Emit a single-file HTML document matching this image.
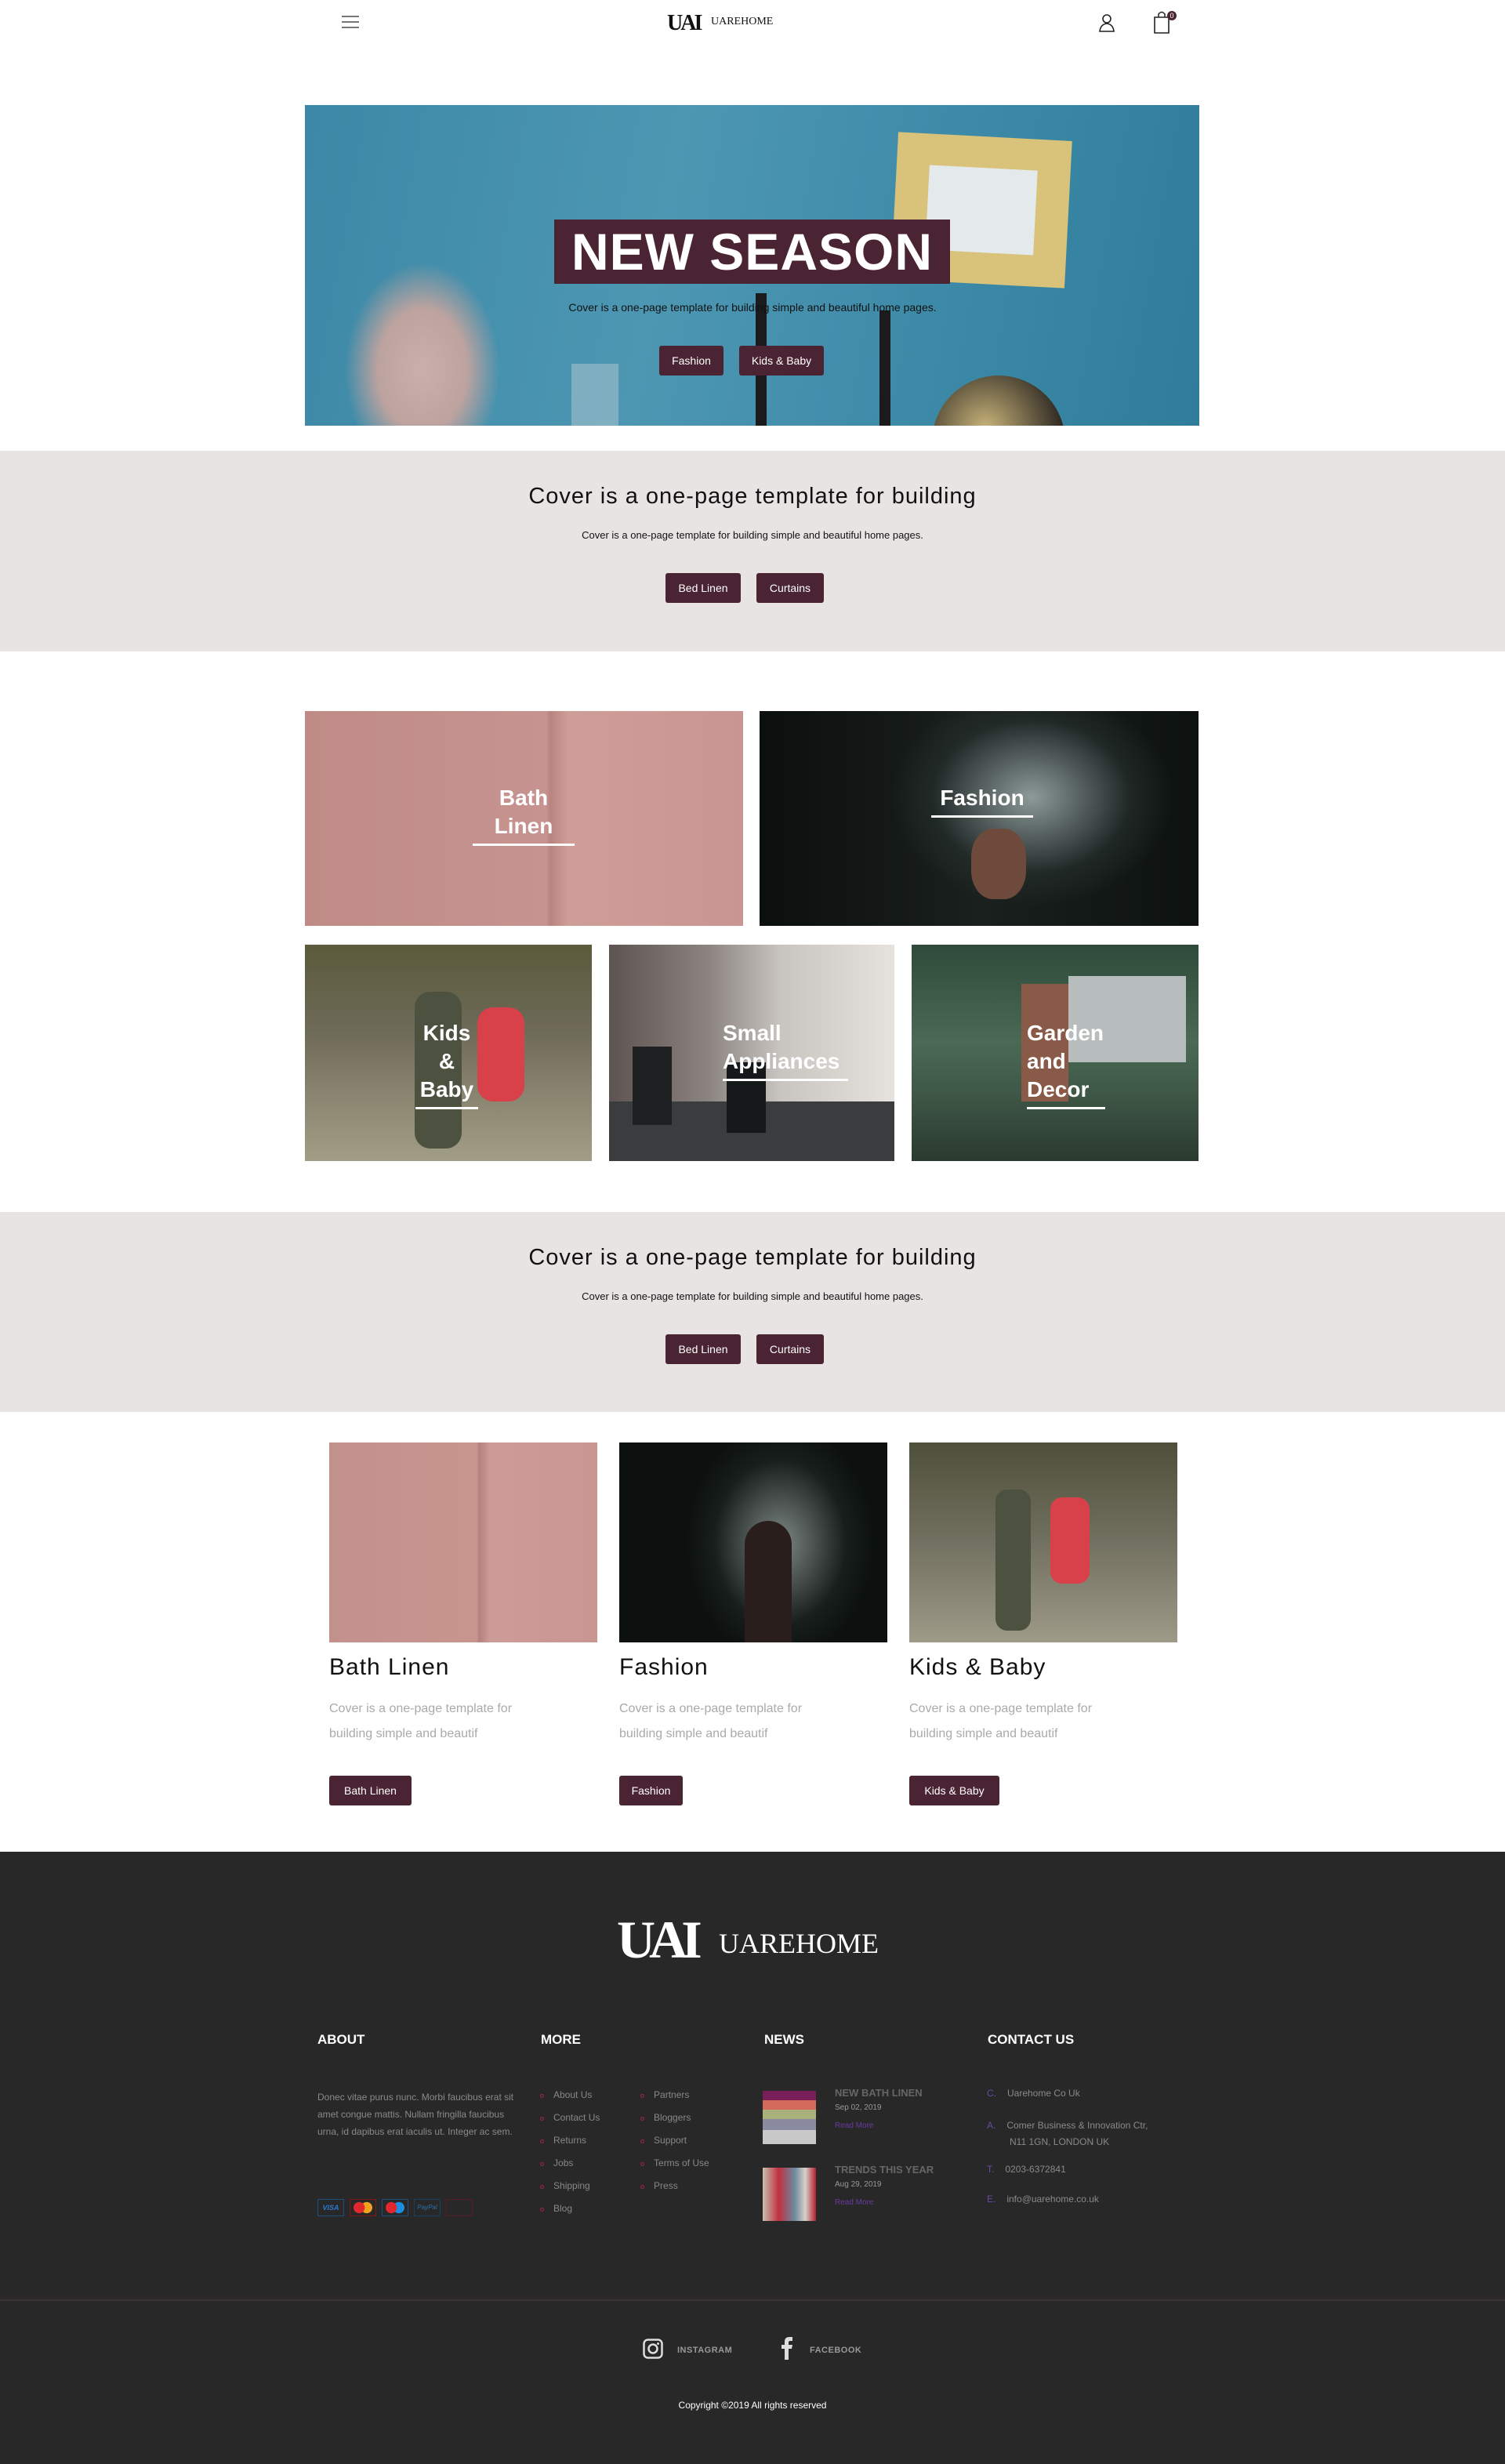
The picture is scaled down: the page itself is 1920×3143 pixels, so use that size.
<!DOCTYPE html>
<html><head><meta charset="utf-8"><style>
*{margin:0;padding:0;box-sizing:border-box}
body{width:1920px;height:3143px;position:relative;background:#fff;font-family:"Liberation Sans",sans-serif;overflow:hidden}
.a{position:absolute}
.btn{position:absolute;background:#4a2433;color:#fff;font-size:14px;border-radius:3px;display:flex;align-items:center;justify-content:center;height:38px}
.band{position:absolute;left:0;width:1920px;background:#e8e4e4;text-align:center}
.band h2{position:absolute;left:0;width:100%;font-size:29px;font-weight:normal;letter-spacing:1px;color:#111;top:42px}
.band p{position:absolute;left:0;width:100%;font-size:13px;top:100px;color:#111}
.tile{position:absolute;overflow:hidden}
.tl{position:absolute;color:#fff;font-weight:bold;font-size:28px;line-height:36px;text-align:center}
.tl:after{content:"";display:block;height:3px;background:#fff;margin-top:4px}
.card h3{font-size:30px;font-weight:normal;color:#111;letter-spacing:1px}
.card p{font-size:16px;line-height:32px;color:#aaa;font-weight:300;margin-top:20px;width:290px}
.fh{position:absolute;top:2592px;color:#fff;font-weight:bold;font-size:17px}
.ft{color:#8a8a8a;font-size:12px}
.li{position:absolute;color:#888;font-size:12px}
.li:before{content:"o";color:#c0245a;font-size:9px;margin-right:12px}
</style></head><body>
<!-- header -->
<div class="a" style="left:436px;top:20px;width:22px;height:16px;border-top:2px solid #777;border-bottom:2px solid #777"><div style="margin-top:5px;height:2px;background:#777"></div></div>
<div class="a" style="left:851px;top:14px;font-family:'Liberation Serif',serif;font-weight:bold;font-size:28px;letter-spacing:-3px;color:#111">UAI</div>
<div class="a" style="left:907px;top:20px;font-family:'Liberation Serif',serif;font-size:14px;color:#111">UAREHOME</div>
<svg class="a" style="left:1400px;top:16px" width="24" height="26" viewBox="0 0 24 26"><circle cx="12" cy="8" r="5" fill="none" stroke="#222" stroke-width="1.6"/><path d="M3 24 Q4 15 12 14 Q20 15 21 24 Z" fill="none" stroke="#222" stroke-width="1.6"/></svg>
<svg class="a" style="left:1470px;top:12px" width="34" height="32" viewBox="0 0 34 32"><path d="M3 10 H21 V30 H3 Z" fill="none" stroke="#222" stroke-width="1.6"/><path d="M8 10 V6 Q12 1 16 6 V10" fill="none" stroke="#222" stroke-width="1.5"/><circle cx="25" cy="8" r="6" fill="#4a2433"/><text x="25" y="11" font-size="9" fill="#fff" text-anchor="middle" font-family="Liberation Sans">0</text></svg>
<!-- hero -->
<div class="a" style="left:389px;top:134px;width:1141px;height:409px;background:linear-gradient(100deg,#3c88a6 0%,#4d97b3 40%,#3d8aa8 70%,#2f7c9b 100%);overflow:hidden">
 <div class="a" style="left:752px;top:40px;width:222px;height:188px;background:#d9c27a;transform:rotate(3deg)"><div style="margin:40px 42px;height:108px;background:#e4e9ec"></div></div>
 <div class="a" style="left:50px;top:200px;width:200px;height:230px;border-radius:50% 50% 0 0;background:radial-gradient(ellipse at 50% 60%,#c9b0ac 0%,#bda39f 40%,rgba(190,165,160,0) 70%)"></div>
 <div class="a" style="left:575px;top:240px;width:14px;height:170px;background:#1b1a1d"></div>
 <div class="a" style="left:733px;top:262px;width:14px;height:150px;background:#1b1a1d"></div>
 <div class="a" style="left:800px;top:345px;width:170px;height:170px;border-radius:50%;background:radial-gradient(circle at 40% 40%,#c9b47a,#2a2520 70%)"></div>
 <div class="a" style="left:340px;top:330px;width:60px;height:90px;background:rgba(180,200,210,.5)"></div>
</div>
<div class="a" style="left:707px;top:280px;width:505px;height:82px;background:#4a2433;color:#fff;font-weight:bold;font-size:66px;line-height:82px;text-align:center;letter-spacing:1px">NEW SEASON</div>
<div class="a" style="left:690px;top:384px;width:540px;text-align:center;font-size:14px;color:#111">Cover is a one-page template for building simple and beautiful home pages.</div>
<div class="btn" style="left:841px;top:441px;width:82px">Fashion</div>
<div class="btn" style="left:943px;top:441px;width:108px">Kids &amp; Baby</div>
<!-- band 1 -->
<div class="band" style="top:575px;height:256px"><h2>Cover is a one-page template for building</h2><p>Cover is a one-page template for building simple and beautiful home pages.</p></div>
<div class="btn" style="left:849px;top:731px;width:96px">Bed Linen</div>
<div class="btn" style="left:965px;top:731px;width:86px">Curtains</div>
<!-- grid -->
<div class="tile" style="left:389px;top:907px;width:559px;height:274px;background:linear-gradient(90deg,#c08b86 0%,#c69390 55%,#b88480 56%,#cf9d98 60%,#c99592 100%)"></div>
<div class="tl" style="left:603px;top:1000px;width:130px">Bath<br>Linen</div>
<div class="tile" style="left:969px;top:907px;width:560px;height:274px;background:radial-gradient(ellipse 180px 140px at 62% 40%,#8c9a98,rgba(40,50,48,.6) 70%,transparent),linear-gradient(90deg,#0b0f0e,#1a201e 50%,#0d1211)"><div class="a" style="left:270px;top:150px;width:70px;height:90px;border-radius:40%;background:#6e4a3c"></div></div>
<div class="tl" style="left:1188px;top:1000px;width:130px">Fashion</div>
<div class="tile" style="left:389px;top:1205px;width:366px;height:276px;background:linear-gradient(180deg,#5b5a3a 0%,#6e6a58 40%,#8a8570 70%,#a29d86 100%)"><div class="a" style="left:140px;top:60px;width:60px;height:200px;background:#4d5240;border-radius:20px"></div><div class="a" style="left:220px;top:80px;width:60px;height:120px;background:#d8404a;border-radius:20px"></div></div>
<div class="tl" style="left:530px;top:1300px;width:80px">Kids<br>&amp;<br>Baby</div>
<div class="tile" style="left:777px;top:1205px;width:364px;height:276px;background:linear-gradient(90deg,#5d5350 0%,#8c8480 35%,#c8c4c0 60%,#e6e2de 100%)"><div class="a" style="left:0;top:200px;width:364px;height:76px;background:#3a3c3e"></div><div class="a" style="left:30px;top:130px;width:50px;height:100px;background:#1d1f20"></div><div class="a" style="left:150px;top:150px;width:50px;height:90px;background:#16191a"></div></div>
<div class="tl" style="left:922px;top:1300px;width:160px;text-align:left">Small<br>Appliances</div>
<div class="tile" style="left:1163px;top:1205px;width:366px;height:276px;background:linear-gradient(180deg,#2f4a3a 0%,#4a6a55 45%,#3e5646 70%,#2a3a30 100%)"><div class="a" style="left:200px;top:40px;width:150px;height:110px;background:#b7bcbc"></div><div class="a" style="left:140px;top:50px;width:60px;height:150px;background:#8a5a48"></div></div>
<div class="tl" style="left:1310px;top:1300px;width:100px;text-align:left">Garden<br>and<br>Decor</div>
<!-- band 2 -->
<div class="band" style="top:1546px;height:255px"><h2>Cover is a one-page template for building</h2><p>Cover is a one-page template for building simple and beautiful home pages.</p></div>
<div class="btn" style="left:849px;top:1702px;width:96px">Bed Linen</div>
<div class="btn" style="left:965px;top:1702px;width:86px">Curtains</div>
<!-- cards -->
<div class="a" style="left:420px;top:1840px;width:342px;height:255px;background:linear-gradient(90deg,#c3918c 0%,#c8958f 55%,#b5827d 56%,#cd9c97 60%,#c99692 100%)"></div>
<div class="a" style="left:790px;top:1840px;width:342px;height:255px;background:radial-gradient(ellipse 120px 150px at 60% 50%,#7f8886,rgba(30,36,34,.7) 70%,transparent),#0c110f"><div class="a" style="left:160px;top:100px;width:60px;height:155px;border-radius:30px 30px 0 0;background:#2a1e1c"></div></div>
<div class="a" style="left:1160px;top:1840px;width:342px;height:255px;background:linear-gradient(180deg,#4e503a,#727060 50%,#9e9a88)"><div class="a" style="left:110px;top:60px;width:45px;height:180px;background:#4d5240;border-radius:15px"></div><div class="a" style="left:180px;top:70px;width:50px;height:110px;background:#d8404a;border-radius:15px"></div></div>
<div class="a card" style="left:420px;top:2110px"><h3>Bath Linen</h3><p>Cover is a one-page template for building simple and beautif</p></div>
<div class="a card" style="left:790px;top:2110px"><h3>Fashion</h3><p>Cover is a one-page template for building simple and beautif</p></div>
<div class="a card" style="left:1160px;top:2110px"><h3>Kids &amp; Baby</h3><p>Cover is a one-page template for building simple and beautif</p></div>
<div class="btn" style="left:420px;top:2265px;width:105px">Bath Linen</div>
<div class="btn" style="left:790px;top:2265px;width:81px">Fashion</div>
<div class="btn" style="left:1160px;top:2265px;width:115px">Kids &amp; Baby</div>
<!-- footer -->
<div class="a" style="left:0;top:2362px;width:1920px;height:781px;background:#282828"></div>
<div class="a" style="left:787px;top:2438px;font-family:'Liberation Serif',serif;font-weight:bold;font-size:68px;letter-spacing:-8px;color:#fff;line-height:72px">UAI</div>
<div class="a" style="left:917px;top:2458px;font-family:'Liberation Serif',serif;font-size:36px;color:#fff">UAREHOME</div>
<div class="fh" style="left:405px">ABOUT</div>
<div class="fh" style="left:690px">MORE</div>
<div class="fh" style="left:975px">NEWS</div>
<div class="fh" style="left:1260px">CONTACT US</div>
<div class="a ft" style="left:405px;top:2664px;width:260px;line-height:22px">Donec vitae purus nunc. Morbi faucibus erat sit amet congue mattis. Nullam fringilla faucibus urna, id dapibus erat iaculis ut. Integer ac sem.</div>
<div class="a" style="left:405px;top:2805px;display:flex;gap:7px">
<div style="width:34px;height:22px;border:1px solid #1a4f80;color:#2a7ad0;font-size:9px;font-style:italic;font-weight:bold;text-align:center;line-height:20px">VISA</div>
<div style="width:34px;height:22px;border:1px solid #7a1a1a;background:radial-gradient(circle at 35% 50%,#e0282e 30%,transparent 32%),radial-gradient(circle at 65% 50%,#f2a21e 30%,transparent 32%)"></div>
<div style="width:34px;height:22px;border:1px solid #1a4f80;background:radial-gradient(circle at 35% 50%,#e0282e 30%,transparent 32%),radial-gradient(circle at 65% 50%,#1a8ee0 30%,transparent 32%)"></div>
<div style="width:34px;height:22px;border:1px solid #1a3f60;color:#2a70b0;font-size:8px;font-style:italic;text-align:center;line-height:20px">PayPal</div>
<div style="width:34px;height:22px;border:1px solid #5a1a2a"></div></div>
<div class="li" style="left:689px;top:2665px">About Us</div><div class="li" style="left:689px;top:2694px">Contact Us</div><div class="li" style="left:689px;top:2723px">Returns</div><div class="li" style="left:689px;top:2752px">Jobs</div><div class="li" style="left:689px;top:2781px">Shipping</div><div class="li" style="left:689px;top:2810px">Blog</div>
<div class="li" style="left:817px;top:2665px">Partners</div><div class="li" style="left:817px;top:2694px">Bloggers</div><div class="li" style="left:817px;top:2723px">Support</div><div class="li" style="left:817px;top:2752px">Terms of Use</div><div class="li" style="left:817px;top:2781px">Press</div>
<div class="a" style="left:973px;top:2667px;width:68px;height:68px;background:repeating-linear-gradient(180deg,#7a1e5a 0 12px,#d46a5a 12px 24px,#a9b07a 24px 36px,#8a8aa0 36px 50px,#c8c8c8 50px 68px)"></div>
<div class="a" style="left:973px;top:2765px;width:68px;height:68px;background:linear-gradient(90deg,#c8c0b0,#c03040 30%,#6a8aa0 60%,#d8d0c8 80%,#b02030)"></div>
<div class="a" style="left:1065px;top:2662px;color:#666;font-size:13px;font-weight:bold">NEW BATH LINEN</div>
<div class="a" style="left:1065px;top:2683px;color:#999;font-size:10px">Sep 02, 2019</div>
<div class="a" style="left:1065px;top:2706px;color:#6a3aa0;font-size:10px">Read More</div>
<div class="a" style="left:1065px;top:2760px;color:#666;font-size:13px;font-weight:bold">TRENDS THIS YEAR</div>
<div class="a" style="left:1065px;top:2781px;color:#999;font-size:10px">Aug 29, 2019</div>
<div class="a" style="left:1065px;top:2804px;color:#6a3aa0;font-size:10px">Read More</div>
<div class="a ft" style="left:1259px;top:2663px"><span style="color:#6a4aa0;margin-right:14px">C.</span>Uarehome Co Uk</div>
<div class="a ft" style="left:1259px;top:2701px;line-height:21px"><span style="color:#6a4aa0;margin-right:14px">A.</span>Comer Business &amp; Innovation Ctr,<br><span style="margin-left:29px">N11 1GN, LONDON UK</span></div>
<div class="a ft" style="left:1259px;top:2760px"><span style="color:#6a4aa0;margin-right:14px">T.</span>0203-6372841</div>
<div class="a ft" style="left:1259px;top:2798px"><span style="color:#6a4aa0;margin-right:14px">E.</span>info@uarehome.co.uk</div>
<div class="a" style="left:0;top:2933px;width:1920px;height:2px;background:#3a3436"></div>
<svg class="a" style="left:820px;top:2983px" width="26" height="26" viewBox="0 0 26 26"><rect x="1.5" y="1.5" width="23" height="23" rx="5" fill="none" stroke="#ddd" stroke-width="2.5"/><circle cx="13" cy="13" r="5.5" fill="none" stroke="#ddd" stroke-width="2.5"/><circle cx="19.5" cy="6.5" r="1.5" fill="#ddd"/></svg>
<div class="a" style="left:864px;top:2992px;color:#999;font-size:11px;font-weight:bold;letter-spacing:.5px">INSTAGRAM</div>
<svg class="a" style="left:996px;top:2980px" width="16" height="30" viewBox="0 0 16 30"><path d="M5 30 V16 H1 V11 H5 V7 Q5 1 11 1 H15 V6 H12 Q10 6 10 8 V11 H15 L14 16 H10 V30 Z" fill="#ddd"/></svg>
<div class="a" style="left:1033px;top:2992px;color:#999;font-size:11px;font-weight:bold;letter-spacing:.5px">FACEBOOK</div>
<div class="a" style="left:0;top:3061px;width:1920px;text-align:center;color:#fff;font-size:12px">Copyright ©2019 All rights reserved</div>
</body></html>
